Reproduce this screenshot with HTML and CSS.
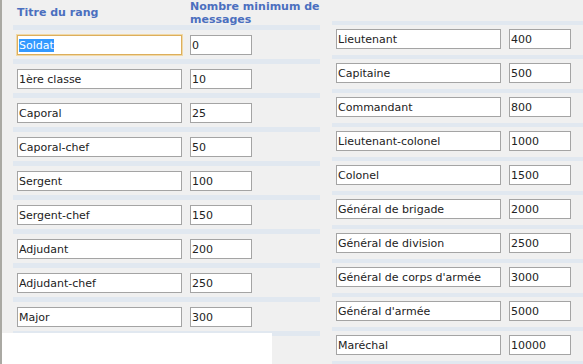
FILE: index.html
```html
<!DOCTYPE html>
<html>
<head>
    <title>Rangs</title>
    <link rel="stylesheet" href="styles.css">
</head>
<body>
<div id="ranks">
    <div class="col left">
        <div class="head">
            <div class="h-name">Titre du rang</div>
            <div class="h-min">Nombre minimum de<br>messages</div>
        </div>
        <div class="row"><input class="name focused" value="Soldat"><input class="min" value="0"></div>
        <div class="row"><input class="name" value="1ère classe"><input class="min" value="10"></div>
        <div class="row"><input class="name" value="Caporal"><input class="min" value="25"></div>
        <div class="row"><input class="name" value="Caporal-chef"><input class="min" value="50"></div>
        <div class="row"><input class="name" value="Sergent"><input class="min" value="100"></div>
        <div class="row"><input class="name" value="Sergent-chef"><input class="min" value="150"></div>
        <div class="row"><input class="name" value="Adjudant"><input class="min" value="200"></div>
        <div class="row"><input class="name" value="Adjudant-chef"><input class="min" value="250"></div>
        <div class="row"><input class="name" value="Major"><input class="min" value="300"></div>
        <div class="strip"></div>
        <div class="blank"></div>
    </div>
    <div class="col right">
        <div class="row"><input class="name" value="Lieutenant"><input class="min" value="400"></div>
        <div class="row"><input class="name" value="Capitaine"><input class="min" value="500"></div>
        <div class="row"><input class="name" value="Commandant"><input class="min" value="800"></div>
        <div class="row"><input class="name" value="Lieutenant-colonel"><input class="min" value="1000"></div>
        <div class="row"><input class="name" value="Colonel"><input class="min" value="1500"></div>
        <div class="row"><input class="name" value="Général de brigade"><input class="min" value="2000"></div>
        <div class="row"><input class="name" value="Général de division"><input class="min" value="2500"></div>
        <div class="row"><input class="name" value="Général de corps d'armée"><input class="min" value="3000"></div>
        <div class="row"><input class="name" value="Général d'armée"><input class="min" value="5000"></div>
        <div class="row"><input class="name" value="Maréchal"><input class="min" value="10000"></div>
        <div class="strip"></div>
    </div>
</div>
<script>
    var f = document.querySelector(".focused");
    f.focus();
    f.setSelectionRange(0, f.value.length);
</script>
</body>
</html>
```

FILE: styles.css
```css
html, body {
    margin: 0;
    padding: 0;
}
body {
    height: 364px;
    overflow: hidden;
    background: #f0f0f0;
    border-left: 2px solid #aaa9a3;
    font-family: "DejaVu Sans", Verdana, sans-serif;
    font-size: 11px;
}
#ranks {
    display: flex;
    gap: 12px;
    padding-left: 11px;
}
.col {
    display: flex;
    flex-direction: column;
}
.left {
    width: 307px;
}
.right {
    flex: 1;
    margin-top: 21px;
}
.head {
    display: flex;
    align-items: center;
    gap: 8px;
    height: 25px;
    padding-left: 4px;
    color: #4b6fbf;
    font-weight: bold;
    line-height: 13px;
    white-space: nowrap;
}
.h-name {
    width: 165px;
}
.row {
    display: flex;
    gap: 8px;
    padding: 5px 4px 4px;
    border-top: 5px solid #e1e8f0;
}
.right .row {
    border-top-width: 4px;
    padding-top: 4px;
    padding-bottom: 6px;
}
.strip {
    height: 5px;
    background: #e1e8f0;
}
.right .strip {
    height: 4px;
}
input {
    box-sizing: border-box;
    height: 20px;
    margin: 0;
    padding: 0 1px;
    border: 1px solid #a4a4a4;
    background: #fff;
    color: #222;
    font-family: "DejaVu Sans", Verdana, sans-serif;
    font-size: 11px;
    outline: none;
}
.name {
    width: 165px;
}
.min {
    width: 62px;
}
.focused {
    border-color: #dcae5c;
    box-shadow: 0 0 0 1px #f1d9a6;
}
.focused::selection {
    background: #3399ff;
    color: #fff;
}
.blank {
    width: 270px;
    height: 40px;
    margin: -3px 0 0 -11px;
    background: #fff;
}
```
